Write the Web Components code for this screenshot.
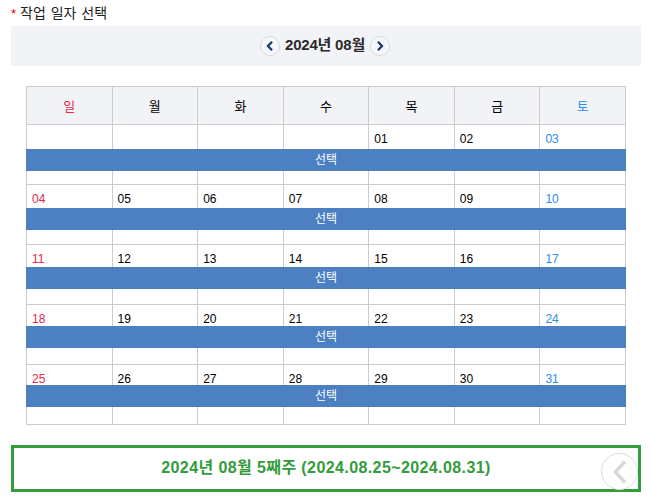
<!DOCTYPE html>
<html lang="ko">
<head>
<meta charset="utf-8">
<title>작업 일자 선택</title>
<style>
    body {
        margin: 0;
        background: #fff;
        color: #222;
        font-family: "Liberation Sans", "Noto Sans CJK KR", sans-serif;
        font-size: 13px;
    }
</style>
</head>
<body>
<work-date-picker year="2024" month="8"></work-date-picker>

<script>
class FieldLabel extends HTMLElement {
    constructor() {
        super();
        this.attachShadow({ mode: 'open' });
        this.shadowRoot.innerHTML = `
            <style>
                :host {
                    display: block;
                    height: 26px;
                    padding-left: 11px;
                    line-height: 27px;
                    font-size: 14px;
                    word-spacing: 1px;
                    color: #222;
                }
                .req {
                    color: #e00000;
                    font-size: 13px;
                    margin-right: 4px;
                }
            </style>
            <span class="req">*</span><slot></slot>
        `;
    }
}

class MonthNav extends HTMLElement {
    constructor() {
        super();
        this.attachShadow({ mode: 'open' });
        this.shadowRoot.innerHTML = `
            <style>
                :host {
                    display: flex;
                    align-items: center;
                    justify-content: center;
                    height: 40px;
                    margin: 0 10px 0 11px;
                    padding-right: 2px;
                    background: #f2f3f7;
                    font-size: 15px;
                    font-weight: bold;
                    letter-spacing: -0.2px;
                    color: #2a2a2a;
                }
                .label { margin: 0 5px 5px 5px; }
                button {
                    width: 20px;
                    height: 20px;
                    padding: 0;
                    border: 1px solid #d8dbe0;
                    border-radius: 50%;
                    background: #f6f7fa;
                    display: flex;
                    align-items: center;
                    justify-content: center;
                }
                svg { display: block; }
            </style>
            <button aria-label="이전 달">
                <svg width="8" height="10" viewBox="0 0 8 10"><path d="M6 0.8 L2 5 L6 9.2" fill="none" stroke="#1c3a70" stroke-width="2.3"/></svg>
            </button>
            <span class="label"><slot></slot></span>
            <button aria-label="다음 달">
                <svg width="8" height="10" viewBox="0 0 8 10"><path d="M2 0.8 L6 5 L2 9.2" fill="none" stroke="#1c3a70" stroke-width="2.3"/></svg>
            </button>
        `;
    }
}

class CalendarHead extends HTMLElement {
    constructor() {
        super();
        this.attachShadow({ mode: 'open' });
        const names = ['일', '월', '화', '수', '목', '금', '토'];
        const cells = names.map((n, i) => {
            const cls = i === 0 ? 'sun' : i === 6 ? 'sat' : '';
            return `<div class="${cls}">${n}</div>`;
        }).join('');
        this.shadowRoot.innerHTML = `
            <style>
                :host {
                    display: grid;
                    grid-template-columns: repeat(7, 1fr);
                    height: 37px;
                    background: #f2f3f7;
                    border-top: 1px solid #ccc;
                    border-bottom: 1px solid #ccc;
                }
                div {
                    display: flex;
                    align-items: center;
                    justify-content: center;
                    border-right: 1px solid #ccc;
                    color: #000;
                    font-size: 13px;
                }
                .sun { color: #e8274b; }
                .sat { color: #2b8cf0; }
            </style>
            ${cells}
        `;
    }
}

class CalendarWeek extends HTMLElement {
    constructor() {
        super();
        this.attachShadow({ mode: 'open' });
    }

    connectedCallback() {
        const days = this.getAttribute('days').split(',');
        const bandTop = this.getAttribute('band-top');
        const cells = days.map((d, i) => {
            const cls = i === 0 ? 'sun' : i === 6 ? 'sat' : '';
            return `<div class="${cls}">${d}</div>`;
        }).join('');
        this.shadowRoot.innerHTML = `
            <style>
                :host {
                    display: grid;
                    grid-template-columns: repeat(7, 1fr);
                    height: 59px;
                    border-bottom: 1px solid #ccc;
                    position: relative;
                }
                div {
                    border-right: 1px solid #ccc;
                    padding: 7px 0 0 5px;
                    line-height: 15px;
                    font-size: 12px;
                    color: #000;
                }
                .sun { color: #e8274b; }
                .sat { color: #2b8cf0; }
                .band {
                    position: absolute;
                    left: -1px;
                    right: 0;
                    top: ${bandTop}px;
                    height: 22px;
                    border: 0;
                    padding: 0;
                    line-height: 23px;
                    text-align: center;
                    font-size: 12px;
                    color: #fff;
                    background: rgba(67, 121, 191, 0.95);
                }
            </style>
            ${cells}
            <div class="band">선택</div>
        `;
    }
}

class WeekResult extends HTMLElement {
    constructor() {
        super();
        this.attachShadow({ mode: 'open' });
        this.shadowRoot.innerHTML = `
            <style>
                :host {
                    display: flex;
                    align-items: center;
                    justify-content: center;
                    box-sizing: border-box;
                    height: 47px;
                    margin: 20px 10px 0 11px;
                    padding-bottom: 5px;
                    border: 3px solid #339c3c;
                    background: #fff;
                    color: #339c3c;
                    font-size: 16px;
                    font-weight: bold;
                    letter-spacing: 0.4px;
                    position: relative;
                }
                .back {
                    position: absolute;
                    right: 0;
                    top: 5px;
                    width: 37px;
                    height: 37px;
                    box-sizing: border-box;
                    border: 1px solid #dcdcdc;
                    border-radius: 50%;
                    background: #fff;
                    display: flex;
                    align-items: center;
                    justify-content: center;
                }
                svg { display: block; }
            </style>
            <slot></slot>
            <div class="back">
                <svg width="14" height="24" viewBox="0 0 14 24"><path d="M12 1.5 L2.5 12 L12 22.5" fill="none" stroke="#dadada" stroke-width="3.5"/></svg>
            </div>
        `;
    }
}

class WorkDatePicker extends HTMLElement {
    constructor() {
        super();
        this.attachShadow({ mode: 'open' });
    }

    connectedCallback() {
        const pad = (n) => String(n).padStart(2, '0');
        const year = Number(this.getAttribute('year'));
        const month = Number(this.getAttribute('month'));
        const offset = new Date(year, month - 1, 1).getDay();
        const last = new Date(year, month, 0).getDate();

        // blank cells before the 1st, then cut into weeks
        const all = Array(offset).fill('').concat(
            Array.from({ length: last }, (_, i) => pad(i + 1))
        );
        let weeks = '';
        for (let i = 0, w = 0; i < all.length; i += 7, w++) {
            weeks += `<calendar-week days="${all.slice(i, i + 7).join(',')}" band-top="${24 - w}"></calendar-week>`;
        }

        this.shadowRoot.innerHTML = `
            <style>
                :host { display: block; }
                .calendar {
                    width: 599px;
                    margin: 20px 0 0 26px;
                    border-left: 1px solid #ccc;
                }
            </style>
            <field-label>작업 일자 선택</field-label>
            <month-nav>${year}년 ${pad(month)}월</month-nav>
            <div class="calendar">
                <calendar-head></calendar-head>
                ${weeks}
            </div>
            <week-result>2024년 08월 5째주 (2024.08.25~2024.08.31)</week-result>
        `;
    }
}

customElements.define('field-label', FieldLabel);
customElements.define('month-nav', MonthNav);
customElements.define('calendar-head', CalendarHead);
customElements.define('calendar-week', CalendarWeek);
customElements.define('week-result', WeekResult);
customElements.define('work-date-picker', WorkDatePicker);
</script>
</body>
</html>
